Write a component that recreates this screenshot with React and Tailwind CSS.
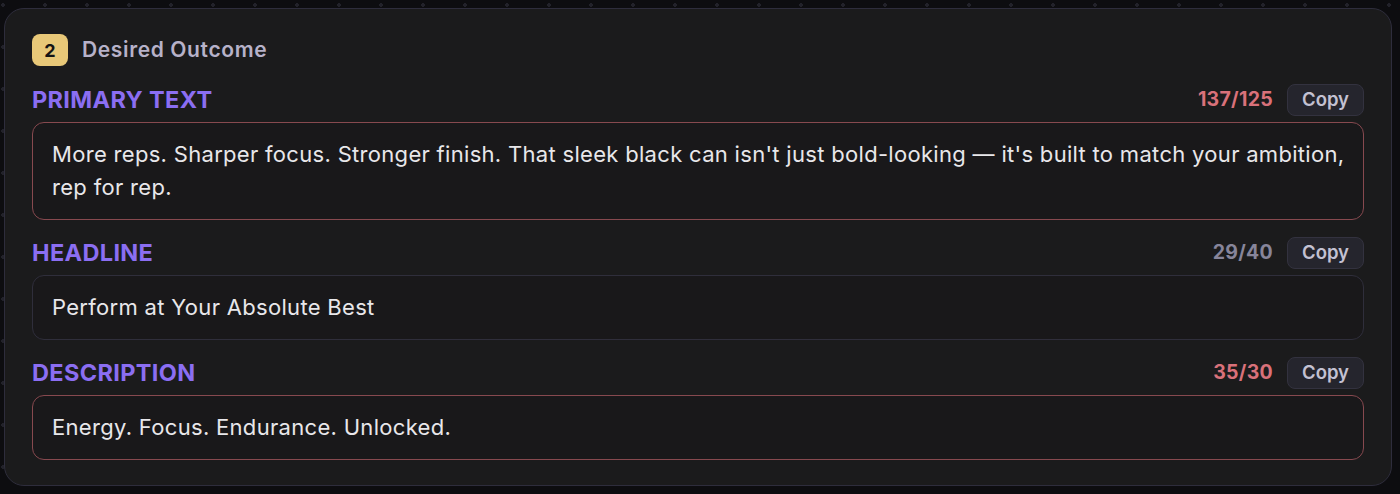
import React from "react";

const fields = [
  {
    label: "PRIMARY TEXT",
    count: "137/125",
    over: true,
    text: "More reps. Sharper focus. Stronger finish. That sleek black can isn't just bold-looking — it's built to match your ambition, rep for rep.",
  },
  {
    label: "HEADLINE",
    count: "29/40",
    over: false,
    text: "Perform at Your Absolute Best",
  },
  {
    label: "DESCRIPTION",
    count: "35/30",
    over: true,
    text: "Energy. Focus. Endurance. Unlocked.",
  },
];

const Field = ({ field }) => (
  <div className="flex flex-col">
    <div className="flex items-center justify-between h-8">
      <span className="text-[23.5px] font-bold text-[#8b6ef2] tracking-[0.015em]">
        {field.label}
      </span>
      <div className="flex items-center gap-[14px]">
        <span
          className={
            field.over
              ? "text-[19.5px] font-bold text-[#d9717a] tracking-[0.015em]"
              : "text-[19.5px] font-bold text-[#87859a] tracking-[0.015em]"
          }
        >
          {field.count}
        </span>
        <button className="h-8 w-[77px] rounded-lg bg-[#25252d] border border-[#33323f] text-[18.5px] font-semibold text-[#c3c1d2]">
          Copy
        </button>
      </div>
    </div>
    {/* text box, red outline when over the limit */}
    <div
      className={
        field.over
          ? "mt-[6px] rounded-xl border border-[#87494f] bg-[#19181a] pl-[19px] pr-[12px] py-[15px] text-[22px] leading-[33px] tracking-[0.014em] text-[#e8e7ea]"
          : "mt-[6px] rounded-xl border border-[#2f2e3b] bg-[#19181a] pl-[19px] pr-[12px] py-[15px] text-[22px] leading-[33px] tracking-[0.014em] text-[#e8e7ea]"
      }
    >
      {field.text}
    </div>
  </div>
);

export default function App() {
  return (
    <div
      className="w-[1400px] h-[494px] bg-[#0d0d10] bg-[radial-gradient(circle,#22222a_1.6px,transparent_1.8px)] bg-[size:42px_42px] bg-[position:-18px_-16px] pt-[8px] pl-[4px] pr-[8px]"
      style={{ fontFamily: "Inter, 'Noto Sans', sans-serif" }}
    >
      <div className="rounded-[20px] border border-[#2e2d3c] bg-[#1b1b1c] px-[27px] pt-[25px] pb-[25px]">
        <div className="flex items-center gap-[14px]">
          <span className="flex h-8 w-9 items-center justify-center rounded-lg bg-[#e8c878] text-[18px] font-bold text-[#141414]">
            2
          </span>
          <span className="text-[21px] font-semibold tracking-[0.03em] text-[#b7b2c9]">
            Desired Outcome
          </span>
        </div>
        <div className="mt-[18px] flex flex-col gap-[17px]">
          {fields.map((f) => (
            <Field key={f.label} field={f} />
          ))}
        </div>
      </div>
    </div>
  );
}
